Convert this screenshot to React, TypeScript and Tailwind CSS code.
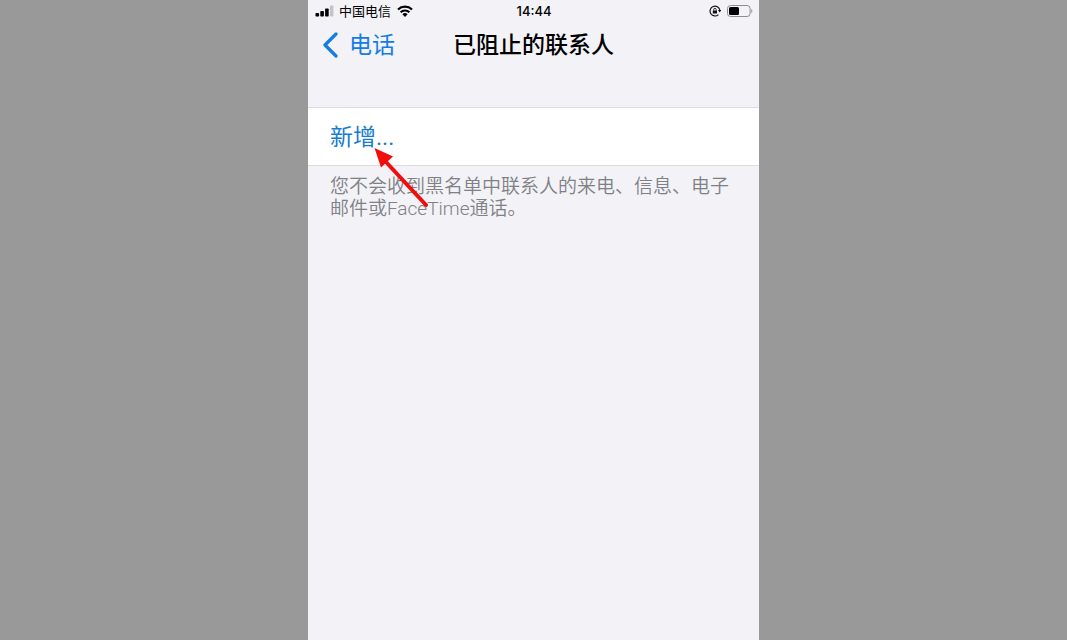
import React from 'react';

const SignalIcon = () => (
  <svg width="20" height="12" viewBox="0 0 20 12" aria-hidden>
    <rect x="0.5" y="8" width="3.6" height="3.5" rx="0.8" fill="#000" />
    <rect x="5.3" y="6" width="3.6" height="5.5" rx="0.8" fill="#000" />
    <rect x="10.1" y="3.5" width="3.6" height="8" rx="0.8" fill="#000" />
    <rect x="15" y="0.5" width="3.4" height="11" rx="0.8" fill="#c4c4c8" />
  </svg>
);

const WifiIcon = () => (
  <svg width="16" height="12" viewBox="0 0 16 12" aria-hidden>
    <path d="M1 4.5a10.2 10.2 0 0 1 14 0" fill="none" stroke="#000" strokeWidth="2.2" />
    <path d="M3.6 7.3a6.3 6.3 0 0 1 8.8 0" fill="none" stroke="#000" strokeWidth="2" />
    <path d="M8 12 5.4 9.3a3.8 3.8 0 0 1 5.2 0z" fill="#000" />
  </svg>
);

const RotationLockIcon = () => (
  <svg width="12" height="12" viewBox="0 0 12 12" aria-hidden>
    <path d="M9.4 9.6A4.9 4.9 0 1 1 10.8 5.2" fill="none" stroke="#111" strokeWidth="1.2" />
    <path d="M9 5h3.2l-1.5 2.6z" fill="#111" />
    <rect x="3.8" y="5.4" width="4.2" height="3.2" rx="0.5" fill="#111" />
    <path d="M4.7 5.6V4.5a1.2 1.2 0 0 1 2.4 0v1.1" fill="none" stroke="#111" strokeWidth="0.9" />
  </svg>
);

const BatteryIcon = () => (
  <svg width="26" height="12" viewBox="0 0 26 12" aria-hidden>
    <rect x="0.5" y="0.5" width="22.6" height="11" rx="3" fill="none" stroke="#8e8e92" />
    <rect x="2" y="2" width="10" height="8" rx="1.5" fill="#000" />
    <path d="M24.3 4v4c1.4-.5 1.4-3.5 0-4z" fill="#8e8e92" />
  </svg>
);

const BackIcon = () => (
  <svg width="16" height="26" viewBox="0 0 16 26" aria-hidden>
    <path
      d="M14 2 3 13l11 11"
      fill="none"
      stroke="currentColor"
      strokeWidth="3.2"
      strokeLinecap="round"
      strokeLinejoin="round"
    />
  </svg>
);

const PointerArrow = () => (
  <svg
    className="pointer-events-none absolute top-10 left-16"
    width="56"
    height="62"
    viewBox="0 0 56 62"
    aria-hidden
  >
    <path d="M14 14 54 57" stroke="#f20d0d" strokeWidth="4" strokeLinecap="round" />
    <path d="M2.5 0 21 8.5 9 19.5z" fill="#f20d0d" />
  </svg>
);

export default function App() {
  return (
    <div className="min-h-screen bg-[#999999] font-['Inter','Noto_Sans_CJK_SC',sans-serif]">
      <main className="mx-auto min-h-screen w-full max-w-[451px] bg-[#f2f2f7]" lang="zh-CN">
        <div className="grid h-5.5 grid-cols-3 items-center pr-1.5 pl-[7px] text-[13px] leading-5.5 text-black">
          <div className="flex items-center gap-1 whitespace-nowrap">
            <SignalIcon />
            <span className="mr-0.5">中国电信</span>
            <WifiIcon />
          </div>
          <time className="text-center font-medium">14:44</time>
          <div className="flex items-center justify-end gap-1.5">
            <RotationLockIcon />
            <BatteryIcon />
          </div>
        </div>

        <header className="grid h-11.5 grid-cols-[1fr_auto_1fr] items-center px-3.5">
          <button type="button" className="flex items-center gap-[11px] text-[23px] text-[#147ce5]">
            <BackIcon />
            <span>电话</span>
          </button>
          <h1 className="text-[23px] font-medium text-black">已阻止的联系人</h1>
        </header>

        <section className="mt-[39px]">
          <div className="relative border-y border-[#dcdce0] bg-white">
            <button
              type="button"
              className="block w-full px-5.5 pt-0.5 text-left font-['Roboto','Noto_Sans_CJK_SC',sans-serif] text-[23px] leading-[55px] text-[#147ccf]"
            >
              新增...
            </button>
            <PointerArrow />
          </div>
          <p className="px-5.5 pt-2.5 font-['Roboto','Noto_Sans_CJK_SC',sans-serif] text-[19px] leading-5.5 font-[350] text-[#808085]">
            您不会收到黑名单中联系人的来电、信息、电子邮件或FaceTime通话。
          </p>
        </section>
      </main>
    </div>
  );
}
